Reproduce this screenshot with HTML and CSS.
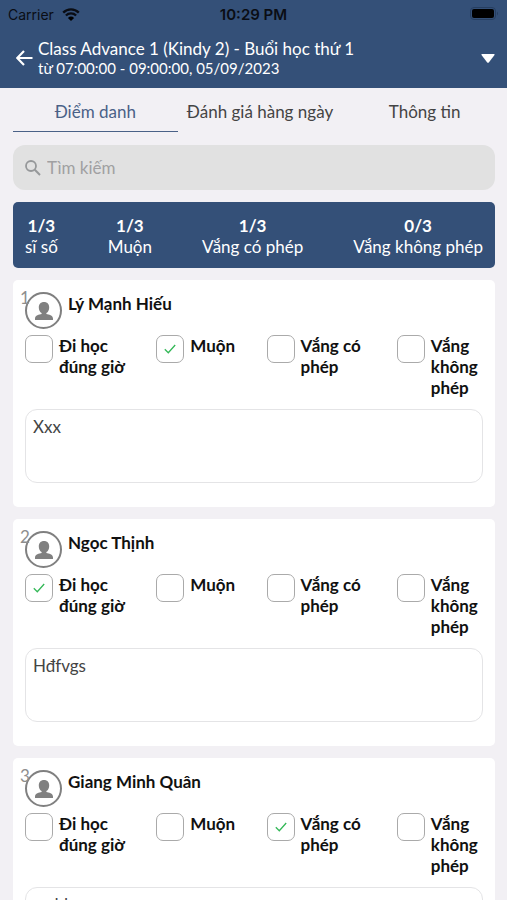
FILE: index.html
```html
<!DOCTYPE html>
<html lang="vi">
<head>
<meta charset="utf-8">
<meta name="viewport" content="width=device-width, initial-scale=1">
<title>Điểm danh</title>
<link rel="stylesheet" href="styles.css">
</head>
<body>
<svg width="0" height="0" class="sprite" aria-hidden="true">
  <symbol id="person" viewBox="0 0 18 18">
    <path d="M9 0C5.700 0 3.800 2.200 3.800 5.400c0 2.400 1 4.500 2.800 5.700v1C4.200 12.700 0 13.300 0 16.600V18h18v-1.400c0-3.300-4.200-3.900-6.600-4.500v-1c1.800-1.200 2.800-3.300 2.800-5.700C14.200 2.200 12.300 0 9 0z"/>
  </symbol>
</svg>
<div class="app">
  <header class="header">
    <div class="status">
      <span class="carrier">Carrier
        <svg class="wifi" viewBox="0 0 18 13" aria-hidden="true"><path d="M1.200 4.600a11 11 0 0 1 15.600 0M3.900 7.500a7.200 7.200 0 0 1 10.200 0" fill="none" stroke="currentColor" stroke-width="2.300"/><path d="M9 13L5.900 9.900a4.400 4.400 0 0 1 6.200 0z"/></svg>
      </span>
      <time class="clock">10:29 PM</time>
      <svg class="battery" viewBox="0 0 29 14" aria-hidden="true"><rect x=".5" y=".5" width="25" height="12" rx="3.500" fill="none" stroke="#263e60"/><rect x="2" y="2" width="22" height="9" rx="2"/><path d="M27 4.500q2 2 0 4z" fill="#263e60"/></svg>
    </div>
    <div class="titlebar">
      <button class="icon-button" aria-label="Quay lại"><svg class="back" viewBox="0 0 17 16" aria-hidden="true"><path d="M16.500 8H1.500M8 1L1.200 8 8 15" fill="none" stroke="#fff" stroke-width="2.200"/></svg></button>
      <div class="titles">
        <h1 class="title">Class Advance 1 (Kindy 2) - Buổi học thứ 1</h1>
        <p class="subtitle">từ 07:00:00 - 09:00:00, 05/09/2023</p>
      </div>
      <button class="icon-button" aria-label="Chọn buổi học"><svg class="caret" viewBox="0 0 14 9" aria-hidden="true"><path d="M1 0h12q1 0 .5 1L8 8.300q-1 1-2 0L.5 1Q0 0 1 0z" fill="#fff"/></svg></button>
    </div>
  </header>
  <nav class="tabs">
    <a href="#attendance" class="tab tab-active" aria-current="page">Điểm danh</a>
    <a href="#review" class="tab">Đánh giá hàng ngày</a>
    <a href="#info" class="tab">Thông tin</a>
  </nav>
  <main class="content">
    <label class="search">
      <svg class="search-icon" viewBox="0 0 16 16" aria-hidden="true"><circle cx="6" cy="6" r="5" fill="none" stroke="#96989a" stroke-width="1.800"/><path d="M9.800 9.800L15 15" stroke="#96989a" stroke-width="2"/></svg>
      <input class="search-input" type="search" placeholder="Tìm kiếm" aria-label="Tìm kiếm">
    </label>
    <section class="stats">
      <div class="stat"><strong>1/3</strong><span>sĩ số</span></div>
      <div class="stat"><strong>1/3</strong><span>Muộn</span></div>
      <div class="stat"><strong>1/3</strong><span>Vắng có phép</span></div>
      <div class="stat"><strong>0/3</strong><span>Vắng không phép</span></div>
    </section>
    <article class="card">
      <div class="student"><span class="avatar"><svg class="person" aria-hidden="true"><use href="#person"/></svg><span class="number">1</span></span><h2 class="name">Lý Mạnh Hiếu</h2></div>
      <div class="options">
        <label class="option"><input type="checkbox" class="check"><span>Đi học đúng giờ</span></label>
        <label class="option"><input type="checkbox" class="check" checked><span>Muộn</span></label>
        <label class="option"><input type="checkbox" class="check"><span>Vắng có phép</span></label>
        <label class="option"><input type="checkbox" class="check"><span>Vắng không phép</span></label>
      </div>
      <textarea class="note" aria-label="Ghi chú cho Lý Mạnh Hiếu" spellcheck="false">Xxx</textarea>
    </article>
    <article class="card">
      <div class="student"><span class="avatar"><svg class="person" aria-hidden="true"><use href="#person"/></svg><span class="number">2</span></span><h2 class="name">Ngọc Thịnh</h2></div>
      <div class="options">
        <label class="option"><input type="checkbox" class="check" checked><span>Đi học đúng giờ</span></label>
        <label class="option"><input type="checkbox" class="check"><span>Muộn</span></label>
        <label class="option"><input type="checkbox" class="check"><span>Vắng có phép</span></label>
        <label class="option"><input type="checkbox" class="check"><span>Vắng không phép</span></label>
      </div>
      <textarea class="note" aria-label="Ghi chú cho Ngọc Thịnh" spellcheck="false">Hđfvgs</textarea>
    </article>
    <article class="card">
      <div class="student"><span class="avatar"><svg class="person" aria-hidden="true"><use href="#person"/></svg><span class="number">3</span></span><h2 class="name">Giang Minh Quân</h2></div>
      <div class="options">
        <label class="option"><input type="checkbox" class="check"><span>Đi học đúng giờ</span></label>
        <label class="option"><input type="checkbox" class="check"><span>Muộn</span></label>
        <label class="option"><input type="checkbox" class="check" checked><span>Vắng có phép</span></label>
        <label class="option"><input type="checkbox" class="check"><span>Vắng không phép</span></label>
      </div>
      <textarea class="note" aria-label="Ghi chú cho Giang Minh Quân" spellcheck="false">ccdd</textarea>
    </article>
  </main>
</div>
</body>
</html>
```
FILE: styles.css
```css
* { box-sizing: border-box; }

body {
  margin: 0;
  background: #f2f0f4;
  color: #111;
  font-family: Lato, "Liberation Sans", sans-serif;
  font-size: 17px;
  line-height: 21px;
}

h1, h2, p { margin: 0; }

button {
  padding: 0;
  border: 0;
  background: none;
}

.sprite { position: absolute; }

.app {
  display: flex;
  flex-direction: column;
  height: 100vh;
}

.header {
  background: #345078;
  color: #fff;
}

.status {
  display: grid;
  grid-template-columns: 1fr auto 1fr;
  align-items: center;
  height: 28px;
  padding: 0 8px;
  color: #0a0d14;
  font-family: "Liberation Sans", sans-serif;
  font-family: Inter, sans-serif;
  font-size: 14px;
}

.carrier {
  display: flex;
  align-items: center;
  gap: 8px;
}

.wifi {
  width: 18px;
  height: 13px;
}

.clock {
  font-size: 15px;
  font-weight: 600;
}

.battery {
  justify-self: end;
  width: 29px;
  height: 14px;
}

.titlebar {
  display: flex;
  align-items: center;
  height: 60px;
  padding: 0 12px 0 16px;
}

.icon-button { display: flex; }

.back {
  width: 17px;
  height: 16px;
}

.caret {
  width: 14px;
  height: 9px;
}

.titles {
  flex: 1;
  padding: 0 0 2px 5px;
}

.title {
  font-size: 17px;
  font-weight: 400;
  line-height: 21px;
}

.subtitle {
  font-size: 15px;
  line-height: 18px;
}

.tabs {
  display: flex;
  padding: 0 0 0 13px;
}

.tab {
  flex: 1;
  height: 44px;
  border-bottom: 1px solid transparent;
  color: #444;
  line-height: 47px;
  text-align: center;
  text-decoration: none;
  white-space: nowrap;
}

.tab-active {
  border-color: #4a6187;
  color: #4a6187;
}

.content {
  display: flex;
  flex: 1;
  flex-direction: column;
  gap: 12px;
  min-height: 0;
  padding: 13px 12px 12px 13px;
  overflow-y: auto;
  scrollbar-width: none;
}

.content > * { flex-shrink: 0; }

.search {
  display: flex;
  align-items: center;
  gap: 6px;
  height: 45px;
  padding: 0 12px;
  border-radius: 12px;
  background: #e1e1e1;
}

.search-icon {
  width: 16px;
  height: 16px;
}

.search-input {
  flex: 1;
  min-width: 0;
  padding: 0;
  border: 0;
  outline: 0;
  background: none;
  font: inherit;
}

.search-input::placeholder { color: #a0a0a2; }

.stats {
  display: flex;
  justify-content: space-between;
  padding: 13px 12px 11px;
  border-radius: 5px;
  background: #345078;
  color: #fff;
}

.stat {
  display: flex;
  flex-direction: column;
  align-items: center;
}

.card {
  padding: 12px 12px 24px;
  border-radius: 5px;
  background: #fff;
}

.student {
  display: flex;
  gap: 6px;
}

.avatar {
  position: relative;
  display: flex;
  align-items: center;
  justify-content: center;
  width: 37px;
  height: 37px;
  border: 2px solid #808080;
  border-radius: 50%;
}

.person {
  width: 18px;
  height: 18px;
  fill: #808080;
}

.number {
  position: absolute;
  top: -7px;
  left: -7px;
  color: #8e8e8e;
}

.name {
  padding-top: 1px;
  font-size: 17px;
  font-weight: 700;
}

.options {
  display: grid;
  grid-template-columns: 123fr 102fr 122fr 86fr;
  column-gap: 8px;
  margin-top: 6px;
}

.option {
  display: flex;
  align-items: flex-start;
  gap: 6px;
  font-weight: 700;
}

.check {
  flex: none;
  width: 28px;
  height: 28px;
  margin: 0;
  border: 1px solid #aaa;
  border-radius: 7px;
  appearance: none;
  background: #fff;
}

.check:checked {
  background: #fff url("data:image/svg+xml,%3Csvg xmlns='http://www.w3.org/2000/svg' viewBox='0 0 12 10'%3E%3Cpath d='M.8 5.300L4.300 8.700 11.200 1' fill='none' stroke='%2334b858' stroke-width='1.300'/%3E%3C/svg%3E") center / 12px 10px no-repeat;
}

.note {
  display: block;
  width: 100%;
  height: 74px;
  margin-top: 11px;
  padding: 6px 7px;
  border: 1px solid #e4e4e6;
  border-radius: 12px;
  outline: 0;
  background: #fff;
  color: #444;
  font: inherit;
  resize: none;
}
```
